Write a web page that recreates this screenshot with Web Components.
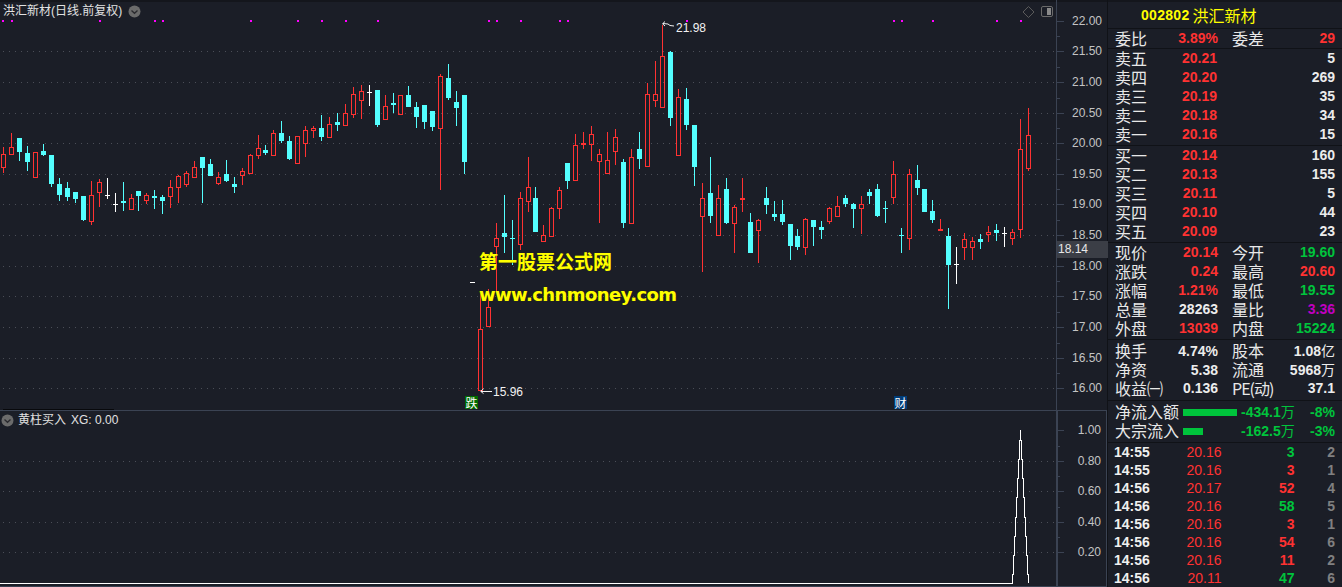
<!DOCTYPE html>
<html lang="zh"><head><meta charset="utf-8"><title>洪汇新材</title>
<style>
html,body{margin:0;padding:0;background:#1b1e27;overflow:hidden}
body{font-family:"Liberation Sans","Noto Sans CJK SC",sans-serif}
</style></head>
<body>
<stock-app></stock-app>
<script>
const RED='#ff3232',CY='#54ffff',WH='#ffffff';
const axisPane=(labels,ticks,extra='')=>`<div class="tk">${ticks.map(t=>`<i style="top:${t[0]}px;width:${t[1]}px"></i>`).join('')}</div>${labels.map(l=>`<span style="top:${l[1]-8}px">${l[0]}</span>`).join('')}${extra}`;

class PriceAxis extends HTMLElement{
  constructor(){super();this.attachShadow({mode:'open'}).innerHTML=`<style>
  :host{display:block;position:relative;width:51px;flex:none;box-sizing:border-box;height:100%;font:12px/16px "Liberation Sans",sans-serif;color:#c4c4c4}
  span{position:absolute;right:var(--label-right,6px);white-space:nowrap}
  .tk i{position:absolute;left:0;height:1px;background:#3b4353}
  .cur{position:absolute;left:0;right:0;top:239px;height:17px;background:#3b3e46;color:#e8e8e8;padding-left:1px;line-height:17px}
  </style><div id="c"></div>`}
  set config(c){this.shadowRoot.getElementById('c').innerHTML=axisPane(c.labels,c.ticks,c.extra||'')}
}
customElements.define('price-axis',PriceAxis);

class PaneTitle extends HTMLElement{
  constructor(){super();this.attachShadow({mode:'open'}).innerHTML=`<style>
  :host{position:absolute;display:flex;align-items:center;font:12px/16px "Liberation Sans","Noto Sans CJK SC",sans-serif;color:#e2e2e2;white-space:nowrap}
  </style><slot name="before"></slot><slot></slot><slot name="after"></slot>`}
}
customElements.define('pane-title',PaneTitle);

class ChevBadge extends HTMLElement{
  constructor(){super();this.attachShadow({mode:'open'}).innerHTML=`<style>:host{display:block;width:13px;height:13px;flex:none}svg{display:block}</style>
  <svg width="13" height="13" viewBox="0 0 13 13"><circle cx="6.5" cy="6.5" r="6" fill="#6b6b6b"/><path d="M3.5 5.5 6.5 8.3 9.5 5.5" fill="none" stroke="#2a2a2e" stroke-width="1.3"/></svg>`}
}
customElements.define('chev-badge',ChevBadge);

const A=`r,147,154,168,173 r,133,147,155,155 c,138,138,152,161 c,146,153,162,171 r,152,152,178,178 c,144,151,155,156 c,155,155,184,187 c,178,184,195,201 c,182,188,197,201 c,192,192,199,203 c,196,196,220,221 r,181,195,222,225 r,179,182,193,207 w,178,195,195,199 w,193,204,204,212 c,182,201,203,211 r,194,198,210,210 c,191,191,196,211 r,193,195,201,204 c,190,196,198,209 c,195,197,201,214 r,180,187,197,208 r,175,176,188,203 r,171,173,185,187 r,161,167,178,178 c,157,157,168,203 c,159,164,176,176 r,172,177,184,185 c,160,174,181,182 c,177,184,187,193 r,168,171,176,185 r,154,155,174,174 r,135,148,156,159 c,145,150,153,155 r,130,133,156,156 c,121,133,141,143 c,136,141,159,160 r,136,136,164,164 r,126,130,144,157 r,126,128,131,138 c,115,128,137,141 r,117,124,138,138 c,113,122,125,131 r,104,113,126,126 r,87,94,115,118 r,85,91,101,119 w,85,92,92,106 c,90,90,125,127 r,95,106,120,120 c,93,103,105,113 r,95,95,115,115 c,86,95,107,107 c,102,107,117,128 c,105,105,122,129 c,111,111,127,131 r,74,76,129,190 c,64,78,98,100 c,91,102,108,126 c,95,95,162,174`;
const B=`w,282,282,282,282 r,293,329,391,391 r,289,307,327,327 r,223,238,247,291 c,195,233,237,253 c,220,238,238,265 r,192,198,245,250 r,157,187,202,212 c,187,198,232,232 r,225,235,242,242 r,207,208,237,237 r,187,190,209,219 c,163,163,181,189 r,134,145,181,181 r,132,143,145,149 r,126,134,145,161 r,149,154,162,223 r,132,160,174,174 r,129,137,152,165 c,159,162,223,228 r,149,157,224,224 c,132,149,159,169 r,83,94,167,167 r,61,94,101,107 r,25,56,108,108 c,51,52,118,126 r,89,97,156,156 c,88,99,125,130 c,125,125,167,186 r,183,198,217,272 c,157,193,216,223 r,185,198,236,236 c,178,189,223,224 r,205,207,224,253 r,178,198,200,212 c,213,222,253,253 r,219,220,231,263 c,187,198,205,214 c,201,214,217,221 c,200,214,222,225 c,224,224,246,260 c,229,236,247,250 r,218,219,248,255 c,220,220,227,246 c,221,227,230,239 r,207,208,222,224 r,196,206,217,217 c,195,198,204,207 c,203,204,209,228 r,196,204,209,234 c,189,192,196,204 c,184,189,216,217 w2,201,208,208,223 r,161,174,198,204 w2,228,235,235,253 r,169,174,239,250 c,165,180,188,195 c,189,189,212,212 c,200,211,220,223 f,219,229,231,231 c,228,236,265,309 w,247,264,264,284 r,233,239,248,260 r,237,241,248,260 c,234,239,242,249 r,226,232,235,242 c,224,230,233,241 w,227,233,233,247 r,229,232,239,245 r,119,149,230,238 r,108,135,169,171`;
const SKIPS=[17,33,50,67,83,100,116];
function candles(){
  const list=(A+' '+B).split(' ');let out='';
  list.forEach((s,i)=>{
    const p=s.split(','),t=p[0],[top,bt,bb,bot]=p.slice(1).map(Number);
    const col=3+8*i-SKIPS.filter(k=>k<=i).length;
    const wc=t==='r'||t==='f'?RED:t==='c'||t==='w2'?CY:WH;
    const wick=(a,b)=>b>a?`<rect x="${col}" y="${a}" width="1" height="${b-a}" fill="${wc}"/>`:'';
    if(t==='w'||t==='w2'){
      out+=wick(top,bot)+`<rect x="${col-2}" y="${bt}" width="5" height="1" fill="${wc}"/>`;
    }else if(t==='c'||t==='f'){
      out+=wick(top,bot)+`<rect x="${col-2}" y="${bt}" width="5" height="${Math.max(bb-bt,1)}" fill="${wc}"/>`;
    }else{
      out+=wick(top,bt)+wick(bb,bot)+`<rect x="${col-1.5}" y="${bt+.5}" width="4" height="${Math.max(bb-bt-1,1)}" fill="none" stroke="${RED}"/>`;
    }
  });
  return out;
}
const grid=(ys)=>ys.map(y=>`<line x1="3" x2="1056" y1="${y+.5}" y2="${y+.5}" stroke="#4b4e57" stroke-dasharray="1 5"/>`).join('');
const MAG=[2,11,99,154,162,250,297,321,345,377,488,496,520,559,567,686,893,901,932,996,1020];

class KlineChart extends HTMLElement{
  constructor(){super();this.attachShadow({mode:'open'}).innerHTML=`<style>
  :host{display:flex;height:408px;flex:none;border-bottom:1px solid #3b4353;border-top:2px solid #14161c;box-sizing:content-box;color:#fff}
  .plot{position:relative;width:1056px;flex:none;border-right:1px solid #3b4353;box-sizing:content-box;margin-top:-2px;height:410px}
  svg{position:absolute;left:0;top:0;display:block}
  pane-title{left:3px;top:3px;gap:6px}
  .note{position:absolute;font:12px/16px "Liberation Sans",sans-serif;color:#f2f2f2}
  .badge{position:absolute;top:396px;width:13px;height:13px;color:#fff;font:12px/13px "Noto Sans CJK SC",sans-serif;text-align:center}
  .wm{position:absolute;left:479px;color:#ffff00;font-weight:700;white-space:nowrap;text-shadow:0 0 1px #3a3a00}
  .wm.a{top:248px;font:700 19px/26px "Noto Sans CJK SC",sans-serif}
  .wm.b{top:283px;font:700 18px/24px "DejaVu Sans",sans-serif;letter-spacing:-.58px}
  .shade{position:absolute;left:3px;top:409px;width:111px;height:1px;background:#08090c}
  price-axis{height:408px}
  </style>
  <div class="plot">
    <svg width="1056" height="410" shape-rendering="crispEdges">
      ${grid([51,82,113,143,174,204,235,266,296,327,358,388])}
      ${MAG.map(x=>`<rect x="${x}" y="20" width="2" height="2" fill="#ff00ff"/>`).join('')}
      ${candles()}
      <g fill="none" stroke="#f2f2f2" shape-rendering="auto">
        <path d="M665 21.5 662.6 23.8 665 26M662.8 23.5 668 24 670 25.5 674 26"/>
        <path d="M483.5 388.8 480.7 391.3 483.5 393.6M481 391.5H492"/>
        <path d="M1028.5 6.5 1034 12 1028.5 17.5 1023 12Z" stroke="#5a5a5a"/>
        <rect x="1041.5" y="6.5" width="11" height="10" rx="1.5" stroke="#6a6a6a"/>
      </g>
      <rect x="1047" y="8" width="4" height="7" fill="#8a8a8a"/>
    </svg>
    <pane-title><span>洪汇新材(日线.前复权)</span><chev-badge slot="after"></chev-badge></pane-title>
    <span class="note" style="left:676px;top:20px">21.98</span>
    <span class="note" style="left:493px;top:384px">15.96</span>
    <span class="badge" style="left:465px;background:#006b00">跌</span>
    <span class="badge" style="left:894px;background:#003c78">财</span>
    <span class="wm a">第一股票公式网</span>
    <span class="wm b">www.chnmoney.com</span>
    <i class="shade"></i>
  </div>
  <price-axis></price-axis>`;
    const v=[22,21.5,21,20.5,20,19.5,19,18.5,18,17.5,17,16.5,16];
    const ys=[21,51,82,113,143,174,204,235,266,296,327,358,388];
    const ticks=[];ys.forEach((y,i)=>{ticks.push([y-2,7]);if(i<ys.length-1)ticks.push([Math.round((y+ys[i+1])/2)-2,3])});
    this.shadowRoot.querySelector('price-axis').config={
      labels:v.map((n,i)=>[n.toFixed(2),ys[i]-2]),ticks,
      extra:`<div class="cur">18.14</div>`};
  }
}
customElements.define('kline-chart',KlineChart);

class IndicatorChart extends HTMLElement{
  constructor(){super();
    const ys=[583,574,555,536,517,497,478,459,440];
    const o=411;
    let d=`M0 ${ys[0]+.5-o}H1012.5`;
    for(let i=1;i<ys.length;i++){d+=`V${ys[i]-o}H${1012.5+i}`}
    d+=`V${430-o}V${440-o}H1021.5`;
    for(let i=ys.length-2;i>=1;i--){d+=`V${ys[i]-o}H${1021.5+(ys.length-1-i)}`}
    d+=`V${583-o}`;
    this.attachShadow({mode:'open'}).innerHTML=`<style>
  :host{display:flex;flex:1;min-height:0;position:relative;border-bottom:1px solid #3b4353}
  .plot{position:relative;width:1056px;flex:none;border-right:1px solid #3b4353}
  svg{position:absolute;left:0;top:0;display:block}
  pane-title{left:1px;top:1px;gap:4px}
  pane-title span+span{margin-left:1px}
  price-axis{width:50px;border:1px solid #3b4353;border-width:0 1px 0 1px;box-sizing:border-box;height:auto;--label-right:5px}
  </style>
  <div class="plot">
    <svg width="1056" height="175"><g shape-rendering="crispEdges">${grid([50,80,111,141])}</g>
      <path d="${d}" fill="none" stroke="#fff" shape-rendering="crispEdges"/></svg>
    <pane-title><chev-badge slot="before"></chev-badge><span>黄柱买入</span><span>XG: 0.00</span></pane-title>
  </div>
  <price-axis></price-axis>`;
    const ys2=[19,50,80,111,141];
    const ticks=[];ys2.forEach((y,i)=>{ticks.push([y,6]);if(i<4)ticks.push([Math.round((y+ys2[i+1])/2),2])});
    this.shadowRoot.querySelector('price-axis').config={labels:['1.00','0.80','0.60','0.40','0.20'].map((t,i)=>[t,ys2[i]]),ticks};
  }
}
customElements.define('indicator-chart',IndicatorChart);

class StatRow extends HTMLElement{
  constructor(){super();this.attachShadow({mode:'open'}).innerHTML=`<style>
  :host{display:grid;grid-template-columns:42px 61px 14px 42px 61px;height:19px;line-height:19px;padding:0 7px;white-space:nowrap;font-size:14px;align-items:center}
  ::slotted([slot=l1]),::slotted([slot=l2]){font:16px/18px "Noto Sans CJK SC",sans-serif;color:#e8e8e8;align-self:start}
  ::slotted([slot=v1]),::slotted([slot=v2]){text-align:right;font-weight:700}
  ::slotted(.r){color:#ff3232}::slotted(.g){color:#00c43c}::slotted(.w){color:#ececec}::slotted(.p){color:#c000c0}
  </style><slot name="l1"></slot><slot name="v1"></slot><span></span><slot name="l2"></slot><slot name="v2"></slot>`}
}
customElements.define('stat-row',StatRow);

class BookRow extends HTMLElement{
  constructor(){super();this.attachShadow({mode:'open'}).innerHTML=`<style>
  :host{display:grid;grid-template-columns:42px 60px 1fr;height:19px;line-height:19px;padding:0 7px;white-space:nowrap;font-size:14px;align-items:center}
  ::slotted([slot=l]){font:16px/19px "Noto Sans CJK SC",sans-serif;color:#e8e8e8}
  ::slotted([slot=p]){text-align:right;font-weight:700;color:#ff3232}
  ::slotted([slot=q]){text-align:right;font-weight:700;color:#ececec}
  </style><slot name="l"></slot><slot name="p"></slot><slot name="q"></slot>`}
}
customElements.define('book-row',BookRow);

class FlowBar extends HTMLElement{
  constructor(){super();this.attachShadow({mode:'open'}).innerHTML=`<style>:host{display:block;height:7px;background:#00c43c}</style>`}
}
customElements.define('flow-bar',FlowBar);

class FlowRow extends HTMLElement{
  constructor(){super();this.attachShadow({mode:'open'}).innerHTML=`<style>
  :host{display:grid;grid-template-columns:68px 58px 54px 1fr;height:19px;padding:0 7px;white-space:nowrap;align-items:center;font-size:14px;line-height:19px;color:#00c43c}
  ::slotted([slot=l]){font:16px/18px "Noto Sans CJK SC",sans-serif;color:#e8e8e8;align-self:start}
  ::slotted([slot=n]){font-weight:700}
  ::slotted([slot=c]){font-weight:700;text-align:right}
  </style><slot name="l"></slot><div><slot name="b"></slot></div><slot name="n"></slot><slot name="c"></slot>`}
}
customElements.define('flow-row',FlowRow);

class TradeRow extends HTMLElement{
  constructor(){super();this.attachShadow({mode:'open'}).innerHTML=`<style>
  :host{display:grid;grid-template-columns:71.5px 36px 73px 1fr;height:18px;line-height:18px;padding:0 7px 0 6px;white-space:nowrap;font-size:14px;align-items:center;font-weight:400}
  ::slotted([slot=t]){color:#f0f0f0;font-weight:700}
  ::slotted([slot=p]){color:#ff3232;text-align:right}
  ::slotted([slot=v]){text-align:right;font-weight:700}
  ::slotted(.r){color:#ff3232}::slotted(.g){color:#00c43c}
  ::slotted([slot=n]){color:#808080;text-align:right;font-weight:700}
  </style><slot name="t"></slot><slot name="p"></slot><slot name="v"></slot><slot name="n"></slot>`}
}
customElements.define('trade-row',TradeRow);

const un=(v)=>v.replace(/[万亿]/,m=>`<span style="font-weight:400;font-family:'Noto Sans CJK SC'">${m}</span>`);
const stat=(a,b,c,d,e,f)=>`<stat-row><span slot="l1">${a}</span><b slot="v1" class="${c}">${un(b)}</b><span slot="l2">${d}</span><b slot="v2" class="${f}">${un(e)}</b></stat-row>`;
const book=r=>r.map(x=>`<book-row><span slot="l">${x[0]}</span><span slot="p">${x[1]}</span><span slot="q">${x[2]}</span></book-row>`).join('');
const trade=r=>r.map(x=>`<trade-row><span slot="t">${x[0]}</span><span slot="p">${x[1]}</span><span slot="v" class="${x[3]}">${x[2]}</span><span slot="n">${x[4]}</span></trade-row>`).join('');
const flow=(l,w,n,c)=>`<flow-row><span slot="l">${l}</span><flow-bar slot="b" style="width:${w}px"></flow-bar><span slot="n">${un(n)}</span><span slot="c">${c}</span></flow-row>`;

class QuotePanel extends HTMLElement{
  constructor(){super();this.attachShadow({mode:'open'}).innerHTML=`<style>
  :host{display:block;width:234px;flex:none;border-left:1px solid #101217;height:587px;overflow:hidden;color:#e8e8e8;font-family:"Liberation Sans","Noto Sans CJK SC",sans-serif}
  section{border-bottom:1px solid #101217;box-sizing:border-box}
  .head{height:29px;border-top:2px solid #14161c;display:flex;align-items:center;justify-content:flex-start;padding-left:33px;gap:3px;color:#ffff00}
  .head b{font-size:14px;letter-spacing:.3px}.head span{font:16px/20px "Noto Sans CJK SC",sans-serif}
  .s1{height:20px}.s2{height:97px}.s3{height:97px}.s4{height:97px}.s5{height:61px;padding-top:1px}.s6{height:42px;padding-top:1px}
  .s7{border:0;padding-top:0}
  .pe{letter-spacing:-1px}
  </style>
  <section class="head"><b>002802</b><span>洪汇新材</span></section>
  <section class="s1">${stat('委比','3.89%','r','委差','29','r')}</section>
  <section class="s2">${book([['卖五','20.21','5'],['卖四','20.20','269'],['卖三','20.19','35'],['卖二','20.18','34'],['卖一','20.16','15']])}</section>
  <section class="s3">${book([['买一','20.14','160'],['买二','20.13','155'],['买三','20.11','5'],['买四','20.10','44'],['买五','20.09','23']])}</section>
  <section class="s4">${stat('现价','20.14','r','今开','19.60','g')}${stat('涨跌','0.24','r','最高','20.60','r')}${stat('涨幅','1.21%','r','最低','19.55','g')}${stat('总量','28263','w','量比','3.36','p')}${stat('外盘','13039','r','内盘','15224','g')}</section>
  <section class="s5">${stat('换手','4.74%','w','股本','1.08亿','w')}${stat('净资','5.38','w','流通','5968万','w')}${stat('收益㈠','0.136','w','<span class="pe">PE(动)</span>','37.1','w')}</section>
  <section class="s6">${flow('净流入额',54,'-434.1万','-8%')}${flow('大宗流入',20,'-162.5万','-3%')}</section>
  <section class="s7">${trade([['14:55','20.16','3','g','2'],['14:55','20.16','3','r','1'],['14:56','20.17','52','r','4'],['14:56','20.16','58','g','5'],['14:56','20.16','3','r','1'],['14:56','20.16','54','r','6'],['14:56','20.16','11','r','2'],['14:56','20.11','47','g','6']])}</section>`}
}
customElements.define('quote-panel',QuotePanel);

class StockApp extends HTMLElement{
  constructor(){super();this.attachShadow({mode:'open'}).innerHTML=`<style>
  :host{display:flex;width:1342px;height:587px;background:#1b1e27;overflow:hidden}
  .left{width:1107px;flex:none;display:flex;flex-direction:column;height:587px}
  </style><div class="left"><kline-chart></kline-chart><indicator-chart></indicator-chart></div><quote-panel></quote-panel>`}
}
customElements.define('stock-app',StockApp);
</script>
</body></html>
